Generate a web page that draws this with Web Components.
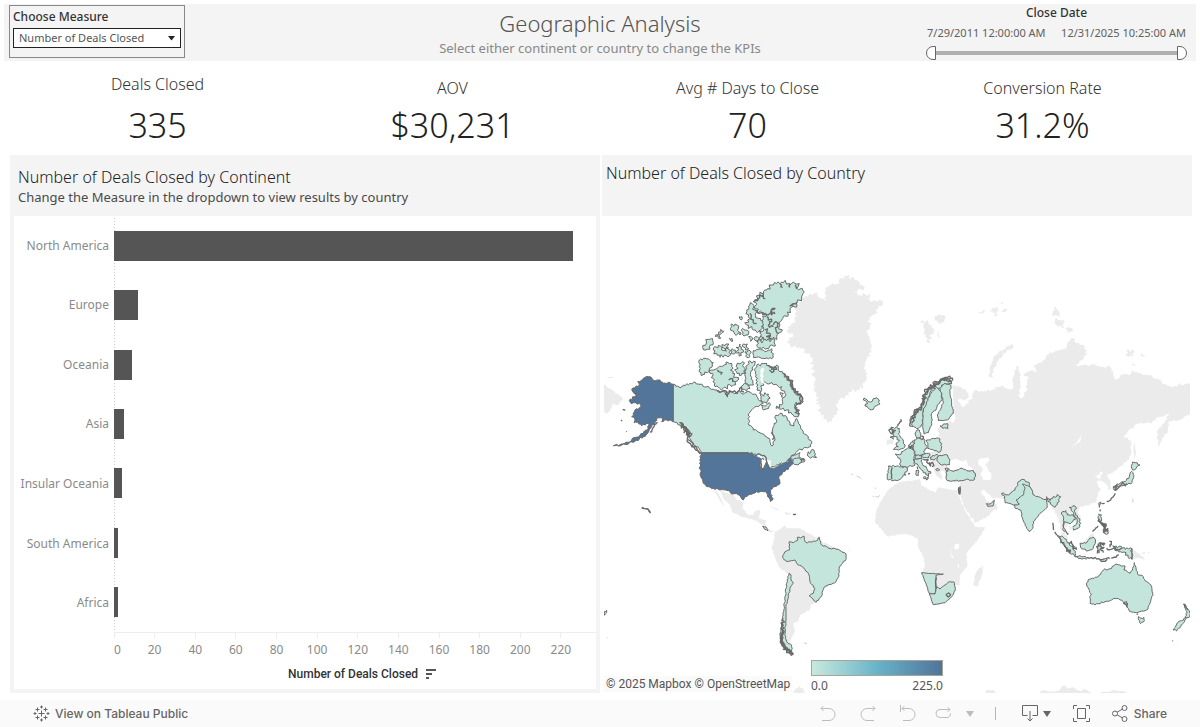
<!DOCTYPE html>
<html lang="en">
<head>
<meta charset="utf-8">
<title>Geographic Analysis</title>
<style>
  html, body { margin: 0; height: 100%; background: #fff; }
  body { font-family: "Noto Sans", "Open Sans", sans-serif; color: #333; }
</style>
</head>
<body>
<geo-dashboard></geo-dashboard>

<script>
const define = (name, html, ready) => {
  const template = document.createElement('template');
  template.innerHTML = html;
  customElements.define(name, class extends HTMLElement {
    connectedCallback() {
      if (this.shadowRoot) return;
      this.attachShadow({ mode: 'open' }).append(template.content.cloneNode(true));
      if (ready) ready.call(this, this.shadowRoot);
    }
  });
};

define('measure-picker', `
<style>
  :host { display: block; box-sizing: border-box; width: 176px; height: 53px; padding: 3px; border: 1px solid #888; color: #333; }
  label { display: block; font-size: 12px; font-weight: 500; line-height: 16px; }
  .box { position: relative; margin-top: 3px; }
  select { appearance: none; box-sizing: border-box; width: 168px; height: 20px; padding: 0 20px 0 5px; border: 1px solid #222; border-radius: 0; background: #fff; color: #555; font: 11px/18px "Noto Sans", sans-serif; display: block; }
  svg { position: absolute; right: 6px; top: 8px; pointer-events: none; }
</style>
<label for="m">Choose Measure</label>
<div class="box">
  <select id="m"><option>Number of Deals Closed</option><option>AOV</option><option>Avg # Days to Close</option><option>Conversion Rate</option></select>
  <svg width="7" height="5"><path d="M0 0h7L3.500 4.500z" fill="#222"/></svg>
</div>`);

define('date-range', `
<style>
  :host { display: block; width: 261px; }
  fieldset { border: 0; margin: 0; padding: 0; min-width: 0; }
  legend { width: 100%; padding: 0; text-align: center; font-size: 12px; font-weight: 500; line-height: 16px; color: #333; }
  .dates { display: flex; justify-content: space-between; height: 16px; margin: 4px 1px 0; white-space: nowrap; font-size: 11px; line-height: 16px; color: #606060; }
  .track { display: grid; align-items: center; height: 14px; margin-top: 5px; background: linear-gradient(#afafaf, #afafaf) center / 242px 4px no-repeat; }
  input { grid-area: 1 / 1; appearance: none; width: 100%; height: 14px; margin: 0; background: none; pointer-events: none; }
  input::-webkit-slider-thumb { appearance: none; pointer-events: auto; box-sizing: border-box; width: 10px; height: 14px; border: 1px solid #666; background: #fff; border-radius: 7px 0 0 7px; }
  #to::-webkit-slider-thumb { border-radius: 0 7px 7px 0; }
</style>
<fieldset>
  <legend>Close Date</legend>
  <div class="dates"><span>7/29/2011 12:00:00 AM</span><span>12/31/2025 10:25:00 AM</span></div>
  <div class="track">
    <input id="from" type="range" min="0" max="100" value="0" aria-label="Start date">
    <input id="to" type="range" min="0" max="100" value="100" aria-label="End date">
  </div>
</fieldset>`);

define('page-header', `
<style>
  :host { display: grid; grid-template-columns: 1fr auto 1fr; margin: 0 4px; padding: 0 9px 0 5px; height: 57px; background: #f4f4f4; }
  measure-picker { margin-top: 1px; }
  date-range { justify-self: end; margin-top: 1px; }
  hgroup { text-align: center; margin: 0 0 0 4px; }
  h1 { margin: 5px 0 0; font-size: 22px; line-height: 28px; font-weight: 300; color: #555; }
  p { margin: 2px 0 0; font-size: 13px; line-height: 18px; color: #888; }
</style>
<measure-picker></measure-picker>
<hgroup><h1>Geographic Analysis</h1><p>Select either continent or country to change the KPIs</p></hgroup>
<date-range></date-range>`);

define('kpi-card', `
<style>
  :host { display: flex; flex-direction: column; justify-content: flex-end; align-items: center; text-align: center; }
  .label { font-size: 16px; line-height: 22px; font-weight: 350; color: #333; }
  .value { margin-top: 4px; font-size: 34px; line-height: 44px; font-weight: 300; color: #222; }
  :host([raised]) .value { margin-top: 8px; }
</style>
<div class="label"><slot name="label"></slot></div>
<div class="value"><slot></slot></div>`);

define('kpi-row', `
<style>
  :host { display: grid; box-sizing: border-box; grid-template-columns: repeat(4, 1fr); height: 87px; margin: 0 10px; padding-bottom: 1px; }
</style>
<kpi-card raised><span slot="label">Deals Closed</span>335</kpi-card>
<kpi-card><span slot="label">AOV</span>$30,231</kpi-card>
<kpi-card><span slot="label">Avg # Days to Close</span>70</kpi-card>
<kpi-card><span slot="label">Conversion Rate</span>31.2%</kpi-card>`);

define('continent-chart', `
<style>
  :host { display: flex; flex-direction: column; box-sizing: border-box; background: #f4f4f4; padding: 0 4px 4px; }
  header { box-sizing: border-box; height: 61px; padding: 11px 4px 0; }
  h2 { margin: 0; font-size: 16px; line-height: 22px; font-weight: 350; color: #222; }
  p { margin: 0; font-size: 13px; line-height: 19px; color: #4a4a4a; }
  .chart { flex: 1; display: grid; grid-template-columns: 100px 1fr; grid-template-rows: 1fr 27px auto; background: #fff; color: #8a8a8a; font-size: 12px; }
  .names, .bars { display: grid; grid-template-rows: repeat(7, 1fr); align-items: center; }
  .names { text-align: right; padding-right: 5px; line-height: 16px; }
  .bars { background: linear-gradient(#ccc 1px, transparent 1px) 0 2px / 1px 3px repeat-y; border-bottom: 1px solid #ededed; }
  .bars i { display: block; height: 30px; background: #555; }
  .axis { grid-column: 2; display: flex; line-height: 16px; overflow: hidden; }
  .axis span { box-sizing: border-box; flex: none; width: 8.43%; padding-top: 9px; text-align: center; background: linear-gradient(#ededed, #ededed) 50% 0 / 1px 5px no-repeat; }
  .axis span:first-child { width: 4.215%; text-align: left; background-position: 0 0; }
  .title { grid-column: 1 / -1; display: flex; align-items: center; gap: 8px; justify-self: start; margin: 4px 0 5px 274px; font: 500 12px/20px Roboto, sans-serif; color: #333; }
</style>
<header><h2>Number of Deals Closed by Continent</h2><p>Change the Measure in the dropdown to view results by country</p></header>
<div class="chart">
  <div class="names"></div>
  <div class="bars"></div>
  <div class="axis"></div>
  <div class="title">Number of Deals Closed
    <svg width="10" height="10" fill="#555"><path d="M0 0h10v2H0zM0 4h6v2H0zM0 8h3v2H0z"/></svg>
  </div>
</div>`, function (root) {
  const data = [['North America', 226], ['Europe', 12], ['Oceania', 9], ['Asia', 5], ['Insular Oceania', 4], ['South America', 2], ['Africa', 2]];
  root.querySelector('.names').innerHTML = data.map(d => `<span>${d[0]}</span>`).join('');
  root.querySelector('.bars').innerHTML = data.map(d => `<i style="width:${(d[1] / 237.3 * 100).toFixed(2)}%"></i>`).join('');
  let ticks = '';
  for (let v = 0; v <= 220; v += 20) ticks += `<span>${v}</span>`;
  root.querySelector('.axis').innerHTML = ticks;
});

/* Map shapes: offset of the region in map units (thirds), then [class, points, roughness]. */
const NONE = 'n', LOW = 'l', HIGH = 'h', SEA = 's', COAST = 'c', SPECK = 'k';
const REGIONS = [
  { at: [760, 260], shapes: [
    [NONE, '260,48 290,60 320,85 285,92 300,105 330,100 335,125 355,120 370,130 345,160 325,175 330,200 322,225 335,260 330,285 315,310 320,350 310,380 270,395 235,430 215,485 200,485 180,455 168,410 165,370 160,330 150,290 120,262 95,262 80,245 100,230 78,220 95,190 110,170 105,145 125,115 165,100 200,118 190,95 230,70', 8],
    [NONE, '485,182 505,182 515,200 520,215 508,250 498,225 490,200', 8],
    [NONE, '522,170 555,168 552,185 535,190 522,182', 6],
    [NONE, '530,205 540,235 533,228', 2], [NONE, '163,362 172,360 172,376 164,374', 2],
    [LOW, '310,420 312,414 322,420 325,425 345,415 358,420 360,432 340,448 325,445 315,438 322,432', 5],
    [SPECK, '274,642 280,644'], [SPECK, '290,648 296,650 304,656'], [SPECK, '344,684 348,685'], [SPECK, '338,708 342,710'], [SPECK, '346,710 354,711 360,706']
  ] },
  { at: [940, 290], shapes: [
    [NONE, '40,285 60,290 80,300 88,320 75,330 55,325 62,345 75,350 85,335 100,325 95,310 110,300 130,306 160,298 185,285 200,295 222,300 218,270 225,240 235,225 240,250 243,290 235,325 248,322 262,300 255,290 268,262 250,255 265,245 290,245 280,228 310,210 320,195 350,182 380,178 385,155 400,145 410,160 435,168 440,190 410,228 440,225 460,222 490,230 510,228 520,250 527,270 545,255 570,255 575,240 590,245 610,255 635,255 640,265 665,270 668,282 690,288 710,290 720,278 722,285 750,282 750,372 720,390 700,390 685,395 683,425 665,445 655,470 650,440 655,415 670,400 690,372 670,380 655,380 635,400 615,398 590,402 550,440 575,452 573,490 560,515 540,530 520,545 500,556 512,575 515,595 504,600 497,580 482,572 487,545 480,545 472,556 464,562 480,568 470,578 480,595 475,620 460,640 430,650 412,655 418,675 425,700 410,705 395,690 370,720 385,745 382,752 365,735 360,700 350,672 335,650 320,640 300,655 270,720 240,650 225,630 210,632 180,625 160,625 140,610 130,598 120,602 135,625 150,640 175,640 172,655 160,662 140,680 105,698 80,660 62,625 56,600 62,575 20,572 15,545 0,540 5,570 -15,545 -25,520 -40,490 0,480 0,445 -10,415 25,400 40,380 40,320', 4],
    [SEA, '32,510 50,506 66,514 80,510 84,528 100,540 60,538 28,542 22,528', 2],
    [SEA, '118,506 145,502 148,512 135,526 146,540 154,556 150,570 130,570 122,550 128,535 114,520', 3],
    [SEA, '425,435 420,455 395,470 412,455', 1], [SEA, '30,372 45,370 48,385 38,398 30,390', 3],
    [NONE, '218,160 220,172 190,190 165,230 155,255 165,268 145,255 155,215 175,185', 4],
    [NONE, '345,50 360,65 355,80 338,78', 6], [NONE, '345,85 370,90 372,112 350,105', 6], [NONE, '385,105 400,118 380,128', 6],
    [NONE, '560,180 582,182 578,200 562,198', 6], [NONE, '600,190 620,198 606,200', 2], [NONE, '576,220 586,222 580,228', 1],
    [NONE, '583,452 588,490 584,512 580,480', 1],
    [NONE, '110,66 136,62 132,68 116,70', 5], [NONE, '150,58 172,52 176,62 160,68', 6], [NONE, '160,76 172,70 170,78', 2], [NONE, '184,66 192,56 202,54 194,66', 3], [NONE, '168,38 190,36 188,42', 2], [NONE, '0,80 16,80 12,96 0,102', 2]
  ] },
  { at: [860, 460], shapes: [
    [NONE, '90,85 120,65 150,62 180,58 182,75 200,85 225,98 235,82 265,88 292,92 305,130 320,160 340,190 345,202 375,200 365,225 340,255 320,280 322,320 300,345 300,375 288,375 285,400 255,430 220,435 210,400 190,350 185,338 195,320 190,290 175,265 172,235 150,225 130,222 85,230 65,210 45,185 50,150 70,110', 2],
    [NONE, '372,315 366,345 352,380 340,375 345,345 350,332', 2],
    [SEA, '284,252 298,252 294,268 282,266', 2], [SEA, '270,270 280,294 276,294', 1], [SEA, '292,300 298,324 294,322', 1],
    [LOW, '185,338 205,340 250,342 228,346 228,380 225,402 208,400 195,365', 1],
    [COAST, '228,352 227,380 232,384', 1],
    [LOW, '208,400 225,402 230,380 240,387 255,375 268,365 282,366 286,390 275,410 255,428 220,434', 1],
    [NONE, '258,404 266,399 272,404 265,411', 1], [COAST, '258,404 266,399 272,404 265,411 258,404', 0]
  ] },
  { at: [600, 480], shapes: [
    [NONE, '360,32 395,42 400,45 410,60 430,64 428,85 445,105 460,105 465,92 482,88 478,105 475,115 497,120 498,138 515,152 526,155 510,158 495,140 470,122 445,115 430,112 400,100 390,75 370,55', 2],
    [NONE, '342,28 350,32 360,50 374,80 362,66 350,45', 1],
    [NONE, '508,78 528,84 544,94 526,88', 1], [NONE, '554,96 574,98 572,104 556,102', 2],
    [NONE, '525,155 545,145 555,136 560,145 600,145 625,160 650,172 665,185 735,215 738,235 718,260 715,290 700,310 670,325 665,345 648,367 632,375 630,390 600,405 595,425 580,430 585,450 578,470 565,490 580,520 560,510 545,490 540,460 550,400 560,340 565,280 540,265 525,235 515,205 520,185', 2],
    [LOW, '568,185 580,188 592,182 592,172 602,174 612,168 618,188 650,182 658,172 665,195 690,205 715,208 738,222 738,238 718,260 716,290 708,305 672,322 665,348 648,367 628,348 640,340 645,325 630,305 625,280 608,262 590,250 585,240 560,245 548,232 555,215 568,210', 2],
    [LOW, '567,280 573,285 573,300 580,310 570,325 565,350 558,380 558,420 555,460 560,485 575,495 575,515 580,522 560,512 545,495 540,460 548,410 555,360 560,310', 2],
    [COAST, '550,415 546,440 550,460 541,470 548,485 544,492 556,500 550,508 566,510 560,518 580,522', 6],
    [COAST, '548,430 552,445 543,462 547,478 541,488 552,494 558,506 572,516', 6],
    [COAST, '546,455 542,480 556,506 580,520', 5], [COAST, '544,460 546,486 562,508 576,518', 5],
    [COAST, '126,82 131,84', 1], [COAST, '139,86 146,90 151,98 148,92', 2],
    [LOW, '488,139 498,141 504,152 494,148', 1], [LOW, '13,395 20,391 20,398 13,406', 2],
    [COAST, '579,103 588,103', 1], [SPECK, '748,211 749,213'], [SPECK, '20,473 23,474'], [SPECK, '612,489 621,491'],
    [NONE, '655,600 648,604 645,614 652,608', 2]
  ] },
  { at: [600, 270], shapes: [
    [NONE, '12,343 70,387 55,405 40,400 22,432 12,425', 3], [NONE, '22,322 38,320 38,324 22,325', 1],
    [HIGH, '220,343 205,337 190,340 175,330 160,330 145,320 130,325 113,335 118,345 108,348 95,358 100,368 112,370 103,380 88,392 95,402 108,398 122,405 118,413 105,420 100,430 95,440 105,447 102,458 115,456 125,468 140,460 148,465 140,480 120,495 95,510 70,522 40,527 75,523 105,513 130,500 145,487 155,470 165,455 170,445 185,442 185,455 200,450 220,455', 4],
    [LOW, '220,343 240,354 250,345 270,340 285,336 300,343 320,350 345,360 360,368 375,362 380,378 385,366 410,370 420,362 430,372 450,366 465,372 478,392 490,400 480,405 460,415 447,430 445,460 460,480 480,488 500,500 508,505 512,525 520,525 524,505 515,490 520,470 530,455 525,440 540,430 560,440 570,465 582,468 590,445 600,465 610,490 625,500 635,515 632,530 610,535 590,545 572,560 600,548 597,560 615,570 600,580 585,580 572,562 560,578 530,585 510,597 502,578 485,560 470,555 445,548 305,548 290,530 275,515 262,490 240,465 220,455', 4],
    [HIGH, '305,549 345,549 395,549 445,549 465,556 490,564 482,574 482,596 490,598 496,575 504,580 510,597 530,590 560,578 572,562 580,580 565,598 550,605 537,620 540,640 525,650 513,658 512,668 518,690 512,695 503,680 500,668 480,665 460,670 445,675 435,680 430,690 420,678 410,670 395,672 385,662 360,660 340,655 320,650 310,640 302,620 300,590 300,560', 3],
    [SEA, '462,556 478,552 496,562 484,566', 2], [SEA, '500,568 514,574 512,592 504,582', 2],
    [SEA, '484,574 494,568 500,574 492,596 484,594', 2],
    [COAST, '464,556 478,552 496,560 500,574 492,596 484,594 484,574', 2],
    [COAST, '238,458 248,464 244,474 256,476 252,488 262,486 266,500 272,498 268,484 256,470 244,462 258,478 268,494 262,506 272,514 280,522 276,528 290,536 296,546 304,546', 6],
    [COAST, '242,460 250,470 258,478 266,492 262,480 254,474 268,500 260,494', 6],
    [COAST, '262,508 266,518 274,526 284,536 300,550', 6],
    [COAST, '150,486 156,480 160,472 164,464 172,456', 5],
    [LOW, '625,545 632,548 636,538 646,552 650,562 638,560 626,560', 5],
    [LOW, '580,568 594,564 612,570 598,580 584,584', 5],
    [COAST, '68,419 76,421', 2], [COAST, '63,450 66,453', 1], [COAST, '79,484 80,486', 1],
    [COAST, '125,714 146,718', 1],
    [LOW, '460,95 480,75 500,60 520,45 550,38 585,40 608,60 605,80 590,100 570,120 545,150 540,165 545,185 530,200 515,212 490,208 480,190 492,180 478,165 488,150 500,135 470,125', 9],
    [LOW, '440,120 446,108 458,102 465,120 475,145 488,160 482,188 460,180 440,165 445,140', 8],
    [COAST, '465,122 485,128 510,130 525,115 512,128 525,132', 6], [COAST, '500,140 515,155 505,165 520,170', 7], [COAST, '590,96 570,108 580,105', 5], [COAST, '495,180 510,190 500,200 515,205', 8], [COAST, '520,165 535,160 528,180 536,190', 8],
    [COAST, '462,96 490,72', 7], [COAST, '540,42 548,52', 4], [COAST, '566,40 570,52', 4], [COAST, '586,44 590,56', 4], [COAST, '484,78 496,86', 4], [COAST, '450,130 460,150 470,160', 7],
    [LOW, '470,215 500,212 525,210 526,228 490,232 472,230', 7],
    [LOW, '460,242 475,238 500,244 515,236 520,262 490,265 460,262', 4],
    [LOW, '335,300 370,288 378,276 395,280 398,310 415,330 400,345 370,355 345,350 340,325 330,310', 7],
    [COAST, '352,300 366,308 362,314', 4], [COAST, '404,334 392,326 386,330', 4],
    [LOW, '298,270 315,265 340,278 328,300 305,318 298,300', 4],
    [LOW, '340,240 355,226 365,240 385,238 388,258 360,262 350,250', 9],
    [LOW, '308,232 325,208 338,206 340,218 322,238', 7], [LOW, '346,200 362,178 372,184 362,205', 9],
    [LOW, '392,165 405,162 415,176 420,195 404,192', 7], [LOW, '428,175 440,180 444,195 432,198', 6], [LOW, '418,140 426,140 424,150', 3],
    [LOW, '408,232 420,222 430,240 424,256 410,250', 8], [LOW, '430,222 442,222 446,236 436,240', 6], [LOW, '435,245 450,242 450,260 440,262', 6],
    [LOW, '388,205 396,205 398,214', 3], [LOW, '446,200 458,204 452,214', 5], [LOW, '366,232 378,222 386,234 378,244', 8], [LOW, '396,236 406,240 402,252 394,250', 5],
    [LOW, '462,205 472,200 474,212', 5], [LOW, '480,200 492,206 484,212', 5],
    [LOW, '410,285 428,275 436,300 425,315 410,305', 7],
    [LOW, '445,275 466,275 458,300 452,318 460,345 445,350 435,330 440,295', 5],
    [LOW, '425,348 440,342 450,355 440,364 428,358', 6], [COAST, '350,362 376,362 382,380 388,362 412,370 424,352 432,366', 6],
    [LOW, '470,285 500,280 510,292 530,285 540,305 560,320 575,345 585,370 605,380 605,400 590,400 585,410 595,440 575,432 560,420 528,415 545,405 555,380 545,350 510,340 490,340 480,372 470,350 466,310', 6],
    [SEA, '484,295 492,290 488,325 494,342 484,338 480,315', 3],
    [COAST, '505,285 515,298 528,292 522,304 508,300', 6],
    [LOW, '484,405 496,408 508,398 506,415 490,420', 5], [LOW, '480,375 505,372 510,385 500,400 490,396', 6], [LOW, '540,368 550,370 546,382', 3],
    [COAST, '560,318 576,340 572,350 586,368 604,378 602,400 588,398 594,436', 8], [COAST, '518,485 522,500 516,508', 5],
    [COAST, '548,310 566,324 578,352 600,378 604,396', 7]
  ] },
  { at: [860, 360], shapes: [
    [LOW, '100,202 118,205 115,222 125,235 135,255 130,265 100,268 115,260 108,250 118,240 105,230 100,215 92,208', 4],
    [LOW, '90,232 102,230 100,238', 3], [COAST, '122,178 124,184 118,190 112,200', 4], [COAST, '92,206 90,216 98,222', 6], [COAST, '94,200 100,210 96,220 108,212', 6],
    [NONE, '80,240 92,236 100,240 98,252 80,258', 3],
    [LOW, '152,180 165,165 175,150 190,125 195,100 215,80 235,65 255,55 275,62 275,72 255,70 240,85 215,88 205,110 200,130 190,150 188,190 175,205 155,200', 4],
    [COAST, '152,200 150,180 162,160 176,146 190,128 192,104 202,90 215,80 232,66 250,55 262,52 278,62', 8],
    [COAST, '156,190 158,172 170,158 184,140 196,98 210,82 228,72 250,60 272,62', 8],
    [COAST, '152,176 164,160 178,148', 6], [COAST, '194,96 216,78 240,62 262,56 276,66', 7],
    [LOW, '215,95 230,82 245,95 245,122 232,135 228,150 215,160 215,190 205,218 192,222 188,200 190,150 200,125', 2],
    [LOW, '240,85 255,70 272,75 270,100 275,130 280,160 262,180 235,182 232,165 245,140 250,125 245,105', 2],
    [LOW, '240,198 262,190 264,205 248,205', 3], [LOW, '168,215 178,210 182,232 170,235', 4], [COAST, '184,228 190,236 178,236', 5],
    [LOW, '162,240 180,235 195,240 200,265 190,275 195,285 165,285 160,265', 3],
    [LOW, '200,240 220,235 240,237 245,260 240,276 225,272 203,265', 3],
    [LOW, '106,282 118,284 130,274 145,262 160,270 165,285 160,300 165,315 140,322 120,315 120,296', 3],
    [LOW, '85,318 115,318 142,324 142,330 130,345 120,358 95,362 82,358', 3], [COAST, '96,322 94,340 96,358', 1],
    [LOW, '162,298 185,293 186,308 200,325 213,340 205,340 205,350 185,330 172,312 163,306', 3],
    [LOW, '190,352 205,352 200,360', 3], [LOW, '168,332 175,330 175,346 169,346', 2], [COAST, '172,320 173,327', 2], [COAST, '132,344 138,345', 1], [COAST, '144,342 150,340', 1],
    [LOW, '185,285 205,280 210,286 205,294 188,292', 3], [LOW, '165,286 184,286 182,296 166,296', 3],
    [LOW, '210,292 232,283 236,290 222,300 212,298', 3], [COAST, '190,296 205,300 200,306 212,318 208,308 220,312 216,320', 6],
    [LOW, '235,288 262,285 270,300 268,315 245,315 230,300', 3],
    [LOW, '145,256 160,242 161,260 150,262', 4], [COAST, '146,258 156,256 148,264 160,266', 5],
    [NONE, '222,318 245,320 256,322 250,330 240,336 244,352 232,350 222,332', 3], [LOW, '227,328 234,325 239,330 232,333', 1],
    [LOW, '257,328 285,332 300,325 320,332 340,332 346,345 344,358 300,362 262,362', 3], [LOW, '255,326 266,326 264,334', 4],
    [LOW, '298,382 301,380 299,403 295,392', 1], [COAST, '298,382 296,392 299,402 301,385', 2],
    [LOW, '379,431 390,432 403,421 399,438 383,439', 1]
  ] },
  { at: [980, 450], shapes: [
    [LOW, '65,130 85,135 105,120 115,95 128,88 148,98 150,112 160,135 148,150 120,175 105,165 75,158 75,140', 3],
    [LOW, '128,102 138,106 150,110 160,135 190,148 200,148 202,172 180,190 160,215 158,235 147,244 140,235 125,200 122,180 108,176 102,165 118,162 108,150 130,135 135,115', 2],
    [LOW, '200,140 210,152 218,145 232,133 242,140 232,158 225,172 212,162 204,155', 4],
    [NONE, '158,238 165,248 160,250', 1],
    [LOW, '245,187 258,182 262,195 280,195 286,208 270,222 252,215 250,232 265,252 262,254 248,238 250,212', 3],
    [LOW, '268,172 285,168 290,175 283,185 300,210 300,230 280,240 278,232 290,222 290,205 278,185', 3],
    [NONE, '262,225 280,232 272,240', 2],
    [LOW, '232,255 250,262 280,295 288,315 270,310 245,275', 3], [COAST, '236,262 252,284 270,308 256,292', 6], [COAST, '278,285 286,292', 5], [COAST, '266,280 274,274 280,290 288,300', 6],
    [LOW, '283,317 310,320 328,325 310,326 286,321', 3], [COAST, '328,324 340,326 356,326 368,328 378,326 390,325', 5], [COAST, '360,330 376,334 382,328', 4], [COAST, '394,324 408,322 416,314', 4],
    [NONE, '302,276 315,274 330,255 338,246 344,265 325,280', 2],
    [LOW, '300,280 318,280 330,264 343,264 346,276 340,295 325,302 305,296', 3],
    [COAST, '352,310 356,298 350,290 356,282 374,280 360,286 372,292 362,296 370,308', 5],
    [LOW, '354,284 364,292 358,308 352,308', 4],
    [LOW, '398,288 412,294 425,290 436,298 456,296 456,328 444,322 432,306 412,302', 5], [COAST, '456,296 456,328', 0], [COAST, '388,274 394,280 390,290 396,284', 5], [COAST, '380,294 392,298 402,294 412,300', 5], [COAST, '400,290 412,298 426,294', 6],
    [NONE, '459,298 480,312 500,332 478,324 459,326', 2], [NONE, '482,310 496,306 494,312', 1],
    [LOW, '356,192 364,194 365,210 360,218 355,205', 3], [COAST, '358,206 366,222 376,226 372,236 384,240 380,250 370,246', 8], [LOW, '372,236 384,234 385,250 374,250', 5], [COAST, '362,212 372,222 378,222 374,230 366,228', 7], [COAST, '364,218 376,232 370,240 382,246', 7], [COAST, '338,245 354,228', 2],
    [LOW, '356,160 362,156 358,172', 2], [COAST, '364,160 374,160', 1], [COAST, '380,154 392,150 400,140 406,130', 3], [COAST, '360,178 361,184', 1], [COAST, '219,218 221,240', 1], [COAST, '224,246 230,256', 1],
    [LOW, '458,36 466,38 480,45 468,56 458,60 454,50', 3],
    [LOW, '455,64 461,82 456,98 434,106 415,110 404,108 420,100 436,94 448,80', 3], [COAST, '400,110 412,108 404,118 424,104 440,100', 7], [LOW, '400,110 408,108 408,122 402,120', 4],
    [LOW, '463,338 475,375 490,380 500,395 515,410 518,430 512,455 500,480 470,488 452,485 438,466 440,455 430,462 425,450 405,445 375,455 345,465 330,460 332,430 320,405 324,390 355,380 370,360 395,355 405,343 420,345 435,348 432,360 450,370 458,355', 3],
    [COAST, '434,456 440,470 442,458', 4], [LOW, '475,500 482,504 492,502 490,516 482,521 476,510', 3], [COAST, '470,492 474,493', 1],
    [LOW, '611,463 620,474 628,482 630,495 624,503 616,500 622,486', 3], [COAST, '610,462 620,474 624,480', 4],
    [LOW, '618,502 614,514 602,530 590,543 580,540 590,522 604,512', 3], [COAST, '577,572 579,573', 1], [SPECK, '592,586 593,587'],
    [SPECK, '458,146 459,158'], [SPECK, '404,170 405,171'], [SPECK, '505,308 508,306']
  ] },
  { at: [600, 640], shapes: [
    [NONE, '580,160 588,145 600,138 608,145 616,160', 4], [NONE, '1155,160 1160,150 1180,150 1190,160', 1],
    [NONE, '1318,160 1325,152 1360,156 1380,148 1392,134 1405,146 1420,142 1440,154 1455,146 1475,160', 3],
    [NONE, '1500,160 1510,155 1530,155 1545,150 1570,154 1594,160', 2]
  ] }
];

define('world-map', `
<style>
  :host { display: block; overflow: hidden; }
  svg { display: block; width: 100%; height: 100%; }
  .n { fill: #ebebeb; }
  .s { fill: #fff; }
  .l { fill: #c4e5dc; stroke: #696969; stroke-width: 3; stroke-linejoin: round; }
  .h { fill: #527599; stroke: #696969; stroke-width: 3; stroke-linejoin: round; }
  .c { fill: none; stroke: #696969; stroke-width: 4; stroke-linejoin: round; }
  .k { fill: none; stroke: #b5b5b5; stroke-width: 2; }
</style>
<svg viewBox="1806 648 1770 1431" preserveAspectRatio="xMidYMid slice" role="img" aria-label="Number of deals closed by country"><defs><clipPath id="b"><path d="M1812 648h1758v1431h-1758z"/></clipPath></defs><g clip-path="url(#b)"></g></svg>`, function (root) {
  let seed = 7;
  const random = () => (seed = (seed * 16807) % 2147483647) / 2147483647 - 0.5;
  /* Splits each edge into short steps and shifts them sideways, for a natural coastline. */
  const coastline = (points, rough, closed) => {
    const out = [];
    const last = closed ? points.length : points.length - 1;
    for (let i = 0; i < last; i++) {
      const [ax, ay] = points[i], [bx, by] = points[(i + 1) % points.length];
      const dx = bx - ax, dy = by - ay, length = Math.hypot(dx, dy) || 1;
      /* long straight runs are surveyed borders */
      const straight = (Math.abs(dx) < 1 || Math.abs(dy) < 2) && length > 39;
      const steps = rough && !straight ? Math.max(1, Math.round(length / 5)) : 1;
      for (let s = 0; s < steps; s++) {
        const t = s / steps, off = s ? random() * rough * 1.8 : 0;
        out.push((ax + dx * t - dy / length * off).toFixed(1) + ' ' + (ay + dy * t + dx / length * off).toFixed(1));
      }
    }
    if (!closed) out.push(points[last].join(' '));
    return 'M' + out.join('L') + (closed ? 'Z' : '');
  };
  root.querySelector('g').innerHTML = REGIONS.map(({ at, shapes }) =>
    `<g transform="translate(${at[0] * 3} ${at[1] * 3})">` + shapes.map(([kind, text, rough = 0]) => {
      const points = text.split(' ').map(p => p.split(',').map(Number));
      return `<path class="${kind}" d="${coastline(points, rough, kind !== COAST && kind !== SPECK)}"/>`;
    }).join('') + '</g>').join('');
});

define('colour-legend', `
<style>
  :host { display: block; width: 132px; color: #555; font-size: 12px; line-height: 16px; }
  .ramp { box-sizing: border-box; height: 16px; border: 1px solid #a9a594; background: linear-gradient(90deg, #c8e9df, #69b3c9 50%, #50749b); }
  .ends { display: flex; justify-content: space-between; margin-top: 2px; }
</style>
<div class="ramp"></div>
<div class="ends"><span>0.0</span><span>225.0</span></div>`);

define('country-map', `
<style>
  :host { display: grid; grid-template-rows: 61px minmax(0, 1fr); }
  header { background: #f4f4f4; padding: 7px 4px 0; }
  h2 { margin: 0; font-size: 16px; line-height: 22px; font-weight: 350; color: #222; }
  .map { position: relative; min-height: 477px; }
  world-map { position: absolute; inset: 0; }
  colour-legend { position: absolute; left: 209px; bottom: -1px; }
  .credit { position: absolute; left: 2px; bottom: 1px; display: flex; gap: 3px; padding: 0 2px; font: 12px/16px Roboto, sans-serif; color: #555; background: #fafafa; }
  a { color: inherit; text-decoration: none; }
</style>
<header><h2>Number of Deals Closed by Country</h2></header>
<div class="map">
  <world-map></world-map>
  <div class="credit"><a href="#mapbox">© 2025 Mapbox</a><a href="#osm">© OpenStreetMap</a></div>
  <colour-legend></colour-legend>
</div>`);

define('viz-toolbar', `
<style>
  :host { display: flex; align-items: center; height: 27px; padding: 0 33px; background: #fafafa; color: #666; font: 500 12px/16px Inter, sans-serif; }
  svg { display: block; fill: none; stroke: currentColor; }
  .solid { fill: currentColor; stroke: none; }
  a, button { display: flex; align-items: center; padding: 0; border: 0; background: none; color: inherit; font: inherit; text-decoration: none; }
  a { gap: 5px; margin-right: auto; }
  button:disabled { color: #bdbdbd; }
  .history { display: flex; align-items: center; gap: 22px; }
  .history button:nth-child(4) { margin-left: -4px; }
  .history button:last-child { margin-left: -9px; }
  hr { width: 1px; height: 13px; margin: 0 26px 0 21px; border: 0; background: #b5b5b5; }
  .actions { display: flex; align-items: center; gap: 22px; }
  .get { gap: 5px; }
  .share { gap: 6px; }
</style>
<a href="#public">
  <svg width="17" height="17" viewBox="0 0 17 17"><path d="M8.500 5.500v6M5.500 8.500h6M8.500 .500v3M7 2h3M8.500 13.500v3M7 15h3M2 7v3M.500 8.500h3M15 7v3M13.500 8.500h3M4.500 2.500v4M2.500 4.500h4M12.500 2.500v4M10.500 4.500h4M4.500 10.500v4M2.500 12.500h4M12.500 10.500v4M10.500 12.500h4"/></svg>
  View on Tableau Public
</a>
<div class="history">
  <button disabled aria-label="Undo"><svg width="18" height="18"><path d="M4.500 1L2 3.500 4.500 6M2 3.500h8a6 6 0 0 1 0 12H3"/></svg></button>
  <button disabled aria-label="Redo"><svg width="18" height="18"><path d="M13.500 1L16 3.500 13.500 6M16 3.500H8a6 6 0 0 0 0 12h7"/></svg></button>
  <button disabled aria-label="Revert"><svg width="18" height="18"><path d="M1.500 0v7M5.500 1L3 3.500 5.500 6M3 3.500h7a6 6 0 0 1 0 12H4"/></svg></button>
  <button disabled aria-label="Refresh"><svg width="18" height="18"><path d="M12.500 2L15 4.500 12.500 7M15 4.500H5a3.500 3.500 0 0 0 0 8h7a3.500 3.500 0 0 0 3.500-4"/></svg></button>
  <button disabled aria-label="Refresh options"><svg class="solid" width="8" height="6"><path d="M0 0h8L4 6z"/></svg></button>
</div>
<hr>
<div class="actions">
  <button class="get" aria-label="Download"><svg width="16" height="17"><path d="M5.500 10.500h-5V.500h15v10h-5M8 6v10M5.500 13.500L8 16l2.500-2.500"/></svg><svg class="solid" width="8" height="6"><path d="M0 0h8L4 6z"/></svg></button>
  <button aria-label="Full screen"><svg width="17" height="17"><path d="M.500 4V.500H4M13 .500h3.500V4M16.500 13v3.500H13M4 16.500H.500V13M4.500 3.500h8v10h-8z"/></svg></button>
  <button class="share"><svg width="16" height="17"><circle cx="3" cy="8.500" r="2.500"/><circle cx="12.500" cy="3" r="2.500"/><circle cx="12.500" cy="14" r="2.500"/><path d="M5.200 7.200l5-3M5.200 9.800l5 3"/></svg>Share</button>
</div>`);

define('geo-dashboard', `
<style>
  :host { display: grid; grid-template-rows: auto auto 1fr auto; box-sizing: border-box; min-height: 100vh; padding-top: 4px; }
  main { display: grid; grid-template-columns: 1fr 1fr; gap: 2px; margin: 7px 8px 7px 10px; }
</style>
<page-header></page-header>
<kpi-row></kpi-row>
<main>
  <continent-chart></continent-chart>
  <country-map></country-map>
</main>
<viz-toolbar></viz-toolbar>`);
</script>
</body>
</html>
